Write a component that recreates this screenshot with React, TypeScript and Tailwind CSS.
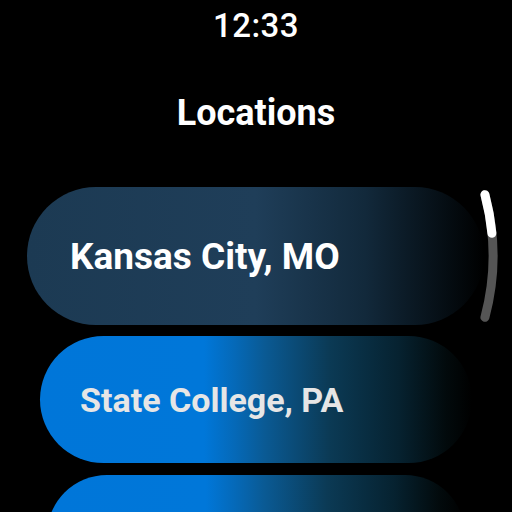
import React from 'react';

const locations = [
  {
    name: 'Kansas City, MO',
    box: 'ml-[27px] w-[457px] h-[138px] pl-[43px]',
    text: 'text-[37px] text-white',
    bg: 'bg-[linear-gradient(to_right,#1c3a53_0%,#1f3e59_50%,#12293b_74%,#040b10_93%,#000_100%)]',
  },
  {
    name: 'State College, PA',
    box: 'mt-[11px] ml-[40px] w-[432px] h-[127px] pl-[40px]',
    text: 'text-[34px] text-[#e6e6e6]',
    bg: 'bg-[linear-gradient(to_right,#0076d9_0%,#0077d9_38%,#0569b8_45%,#0a5a94_52%,#0b3a55_67%,#062230_83%,#020a0c_94%,#000_100%)]',
  },
  {
    name: '',
    box: 'mt-[12px] ml-[47px] w-[418px] h-[120px] pl-[40px]',
    text: 'text-[32px] text-[#e6e6e6]',
    bg: 'bg-[linear-gradient(to_right,#0076d9_0%,#0077d9_38%,#0569b8_45%,#0a5a94_52%,#0b3a55_67%,#062230_83%,#020a0c_94%,#000_100%)]',
  },
];

// scroll indicator: arc on a circle round the screen centre
const arc = (r: number, a0: number, a1: number) => {
  const rad = (d: number) => (d * Math.PI) / 180;
  const x0 = 256 + r * Math.cos(rad(a0));
  const y0 = 256 + r * Math.sin(rad(a0));
  const x1 = 256 + r * Math.cos(rad(a1));
  const y1 = 256 + r * Math.sin(rad(a1));
  return `M ${x0} ${y0} A ${r} ${r} 0 0 1 ${x1} ${y1}`;
};

const App = () => {
  return (
    <div
      className="relative flex flex-col w-[512px] h-[512px] overflow-hidden bg-black"
      style={{ fontFamily: 'Roboto, "Noto Sans", sans-serif' }}
    >
      <div className="pt-[9px] text-center text-[33px] leading-[33px] font-medium text-white tracking-[0.5px]">
        12:33
      </div>
      <div className="mt-[53px] text-center text-[36px] leading-[36px] font-bold text-white">
        Locations
      </div>

      <div className="flex flex-col items-start mt-[56px]">
        {locations.map((loc, i) => (
          <div key={i} className={`flex items-center shrink-0 rounded-full ${loc.box} ${loc.bg}`}>
            {loc.name && <span className={`font-bold leading-none ${loc.text}`}>{loc.name}</span>}
          </div>
        ))}
      </div>

      <svg className="absolute inset-0" width="512" height="512" viewBox="0 0 512 512">
        <path d={arc(237, -15, 15)} stroke="#555555" strokeWidth="9" strokeLinecap="round" fill="none" />
        <path d={arc(237, -15, -5.5)} stroke="#ffffff" strokeWidth="9" strokeLinecap="round" fill="none" />
      </svg>
    </div>
  );
};

export default App;
